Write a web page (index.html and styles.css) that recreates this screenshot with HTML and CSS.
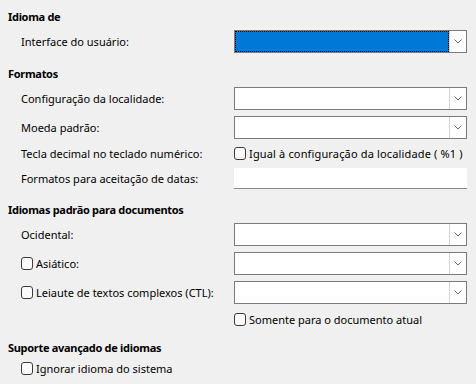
FILE: index.html
```html
<!DOCTYPE html>
<html lang="pt">
<head>
<meta charset="utf-8">
<link rel="stylesheet" href="styles.css">
</head>
<body>
<div class="page">
  <h2 class="head h1">Idioma de</h2>
  <div class="row r1">
    <span class="label">Interface do usuário:</span>
    <div class="combo focused">
      <div class="field"><span class="sel"></span></div>
      <div class="btn"><svg width="8" height="5" viewBox="0 0 8 5"><path d="M0.5 0.5 L4 4 L7.5 0.5" fill="none" stroke="#666" stroke-width="1"/></svg></div>
    </div>
  </div>

  <h2 class="head h2">Formatos</h2>
  <div class="row r2">
    <span class="label">Configuração da localidade:</span>
    <div class="combo">
      <div class="field"></div>
      <div class="btn"><svg width="8" height="5" viewBox="0 0 8 5"><path d="M0.5 0.5 L4 4 L7.5 0.5" fill="none" stroke="#666" stroke-width="1"/></svg></div>
    </div>
  </div>
  <div class="row r3">
    <span class="label">Moeda padrão:</span>
    <div class="combo">
      <div class="field"></div>
      <div class="btn"><svg width="8" height="5" viewBox="0 0 8 5"><path d="M0.5 0.5 L4 4 L7.5 0.5" fill="none" stroke="#666" stroke-width="1"/></svg></div>
    </div>
  </div>
  <div class="row crow r4">
    <span class="label">Tecla decimal no teclado numérico:</span>
    <label class="check"><span class="box"></span><span class="wide">Igual à configuração da localidade ( %1 )</span></label>
  </div>
  <div class="row drow r5">
    <span class="label">Formatos para aceitação de datas:</span>
    <div class="entry"></div>
  </div>

  <h2 class="head h3">Idiomas padrão para documentos</h2>
  <div class="row r6">
    <span class="label">Ocidental:</span>
    <div class="combo">
      <div class="field"></div>
      <div class="btn"><svg width="8" height="5" viewBox="0 0 8 5"><path d="M0.5 0.5 L4 4 L7.5 0.5" fill="none" stroke="#666" stroke-width="1"/></svg></div>
    </div>
  </div>
  <div class="row r7">
    <label class="check label"><span class="box"></span><span>Asiático:</span></label>
    <div class="combo">
      <div class="field"></div>
      <div class="btn"><svg width="8" height="5" viewBox="0 0 8 5"><path d="M0.5 0.5 L4 4 L7.5 0.5" fill="none" stroke="#666" stroke-width="1"/></svg></div>
    </div>
  </div>
  <div class="row r8">
    <label class="check label"><span class="box"></span><span>Leiaute de textos complexos (CTL):</span></label>
    <div class="combo">
      <div class="field"></div>
      <div class="btn"><svg width="8" height="5" viewBox="0 0 8 5"><path d="M0.5 0.5 L4 4 L7.5 0.5" fill="none" stroke="#666" stroke-width="1"/></svg></div>
    </div>
  </div>
  <div class="row crow r9">
    <span class="label"></span>
    <label class="check"><span class="box"></span><span>Somente para o documento atual</span></label>
  </div>

  <h2 class="head h4">Suporte avançado de idiomas</h2>
  <div class="row crow r10">
    <label class="check label"><span class="box"></span><span>Ignorar idioma do sistema</span></label>
  </div>
</div>
</body>
</html>
```

FILE: styles.css
```css
html, body {
  margin: 0;
  padding: 0;
  background: #f0f0f0;
}
body {
  font-family: "Noto Sans", "Open Sans", sans-serif;
  font-size: 11px;
  color: #000;
  width: 476px;
  height: 384px;
  overflow: hidden;
}
.page {
  padding: 9px 9px 0 8px;
  display: flex;
  flex-direction: column;
}
.head {
  margin: 0;
  height: 16px;
  line-height: 16px;
  font-size: 11px;
  font-weight: bold;
  letter-spacing: -0.3px;
}
.h2 { margin-top: 13px; }
.h3 { margin-top: 13px; }
.h4 { margin-top: 11px; }

.row {
  display: grid;
  grid-template-columns: 226px 233px;
  align-items: center;
  height: 23px;
}
.label {
  padding-left: 13px;
  white-space: nowrap;
}
.r1 { margin-top: 5px; }
.r2 { margin-top: 5px; }
.r3 { margin-top: 6px; }
.crow { height: 20px; }
.r4 { margin-top: 4px; }
.drow { height: 21px; }
.r5 { margin-top: 5px; }
.r6 { margin-top: 5px; }
.r7 { margin-top: 6px; }
.r8 { margin-top: 6px; }
.r9 { margin-top: 5px; }
.r10 { margin-top: 2px; }

.combo {
  box-sizing: border-box;
  height: 23px;
  border: 1px solid #7a7a7a;
  background: #fff;
  display: flex;
}
.field {
  flex: 1;
  display: flex;
}
.focused .sel {
  flex: 1;
  background: #0078d7;
  outline: 1px dotted #000;
  outline-offset: -1px;
}
.btn {
  box-sizing: border-box;
  width: 17px;
  border-left: 1px solid #d4d4d4;
  display: flex;
  align-items: center;
  justify-content: center;
}
.btn svg { display: block; }

.entry {
  box-sizing: border-box;
  height: 21px;
  background: #fff;
  border-bottom: 1px solid #8a8a8a;
}

.check {
  display: flex;
  align-items: center;
  white-space: nowrap;
}
.check.label { padding-left: 13px; }
.wide { letter-spacing: 0.15px; }
.box {
  box-sizing: border-box;
  width: 12px;
  height: 13px;
  border: 1px solid #3a3a3a;
  border-radius: 3px;
  background: #fbfbfb;
  margin-right: 3px;
  flex: none;
}
```
